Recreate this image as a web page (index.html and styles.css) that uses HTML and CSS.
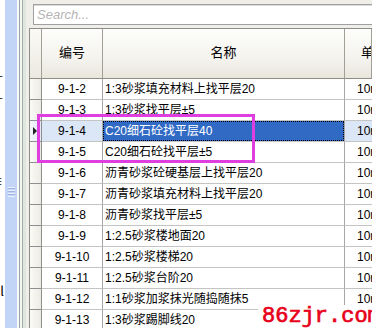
FILE: index.html
```html
<!DOCTYPE html>
<html>
<head>
<meta charset="utf-8">
<link rel="stylesheet" href="styles.css">
</head>
<body>
<div class="app">
  <div class="leftpane">
    <div class="frag f1">·</div>
    <div class="frag f2">卄</div>
    <div class="frag f3">卄</div>
    <div class="frag f4">≡</div>
    <div class="frag f5">l</div>
  </div>
  <div class="vbar"><div class="grip"></div></div>
  <div class="splitter"></div>
  <div class="panel">
    <div class="searchwrap"><div class="search">Search...</div></div>
    <div class="grid">
      <div class="row head">
        <div class="c rh"></div>
        <div class="c code">编号</div>
        <div class="c name">名称</div>
        <div class="c unit">单位</div>
      </div>
      <div class="row"><div class="c rh"></div><div class="c code">9-1-2</div><div class="c name">1:3砂浆填充材料上找平层20</div><div class="c unit">10m²</div></div>
      <div class="row"><div class="c rh"></div><div class="c code">9-1-3</div><div class="c name">1:3砂浆找平层±5</div><div class="c unit">10m²</div></div>
      <div class="row sel"><div class="c rh"><span class="arrow"></span></div><div class="c code">9-1-4</div><div class="c name"><span class="focus">C20细石砼找平层40</span></div><div class="c unit">10m²</div></div>
      <div class="row"><div class="c rh"></div><div class="c code">9-1-5</div><div class="c name">C20细石砼找平层±5</div><div class="c unit">10m²</div></div>
      <div class="row"><div class="c rh"></div><div class="c code">9-1-6</div><div class="c name">沥青砂浆砼硬基层上找平层20</div><div class="c unit">10m²</div></div>
      <div class="row"><div class="c rh"></div><div class="c code">9-1-7</div><div class="c name">沥青砂浆填充材料上找平层20</div><div class="c unit">10m²</div></div>
      <div class="row"><div class="c rh"></div><div class="c code">9-1-8</div><div class="c name">沥青砂浆找平层±5</div><div class="c unit">10m²</div></div>
      <div class="row"><div class="c rh"></div><div class="c code">9-1-9</div><div class="c name">1:2.5砂浆楼地面20</div><div class="c unit">10m²</div></div>
      <div class="row"><div class="c rh"></div><div class="c code">9-1-10</div><div class="c name">1:2.5砂浆楼梯20</div><div class="c unit">10m²</div></div>
      <div class="row"><div class="c rh"></div><div class="c code">9-1-11</div><div class="c name">1:2.5砂浆台阶20</div><div class="c unit">10m²</div></div>
      <div class="row"><div class="c rh"></div><div class="c code">9-1-12</div><div class="c name">1:1砂浆加浆抹光随捣随抹5</div><div class="c unit">10m²</div></div>
      <div class="row"><div class="c rh"></div><div class="c code">9-1-13</div><div class="c name">1:3砂浆踢脚线20</div><div class="c unit">10m²</div></div>
    </div>
  </div>
  <div class="mark"></div>
  <div class="watermark">86zjr.com</div>
</div>
</body>
</html>
```
FILE: styles.css
```css
* { box-sizing: border-box; }
html, body { margin: 0; padding: 0; }
body {
  width: 372px;
  height: 328px;
  overflow: hidden;
  background: #ffffff;
  font-family: "Liberation Sans", Arial, "Noto Sans CJK SC", sans-serif;
  font-size: 12px;
  color: #000;
}
.app {
  position: relative;
  display: flex;
  width: 372px;
  height: 328px;
  overflow: hidden;
}
.leftpane {
  width: 5px;
  flex: none;
  background: #fff;
  overflow: hidden;
  direction: rtl;
  position: relative;
}
.frag {
  font-family: "Noto Sans CJK SC", sans-serif;
  font-size: 13px;
  line-height: 14px;
  white-space: nowrap;
  text-align: right;
  margin-right: 2px;
}
.f1 { margin-top: 12px; }
.f2 { margin-top: 44px; }
.f3 { margin-top: 8px; }
.f4 { margin-top: 68px; }
.f5 { margin-top: 96px; margin-right: 1px; }
.vbar {
  width: 12px;
  flex: none;
  background: #c3d5f6;
  display: flex;
  flex-direction: column;
  align-items: center;
  padding-top: 187px;
}
.grip {
  width: 7px;
  height: 10px;
  background: repeating-linear-gradient(#e9f0fd 0 1px, #9fb5df 1px 2px, transparent 2px 3px);
}
.splitter {
  width: 9px;
  flex: none;
  background: linear-gradient(90deg, #f7f9f7 0 2px, #9ca4aa 2px 3px, #f2f5f2 3px 5px, #a4aea4 5px 6px, #dfe6df 6px 9px);
}
.panel {
  flex: 1;
  background: #efeee8;
  display: flex;
  flex-direction: column;
  padding-left: 3px;
  min-width: 0;
}
.searchwrap {
  height: 28px;
  padding: 4px 0 3px 4px;
}
.search {
  height: 21px;
  border: 1px solid #a0a0a0;
  border-right: none;
  background: #fff;
  box-shadow: inset 0 1px 0 #dcdcdc;
  color: #b4b4b4;
  font-style: italic;
  font-size: 13px;
  line-height: 19px;
  padding-left: 3px;
}
.grid {
  border-top: 1px solid #8e8e88;
  border-left: 1px solid #8e8e88;
  background: #fff;
  flex: 1;
}
.row {
  display: flex;
  height: 21px;
}
.c {
  height: 100%;
  border-right: 1px solid #a7a7a7;
  border-bottom: 1px solid #c4c4c4;
  line-height: 20px;
  white-space: nowrap;
  overflow: hidden;
}
.rh {
  width: 12px;
  flex: none;
  background: linear-gradient(90deg, #fbfaf6, #ecebe3);
  border-right: 1px solid #8f8f8f;
  border-bottom: 1px solid #8f8f8f;
  position: relative;
}
.code {
  width: 61px;
  flex: none;
  text-align: center;
}
.name {
  width: 242px;
  flex: none;
  padding-left: 2px;
}
.unit {
  flex: 1;
  border-right: none;
  padding-left: 12px;
}
.head {
  height: 50px;
}
.head .c {
  background: linear-gradient(#fdfdfb, #f4f3ee 60%, #e8e6dc);
  border-bottom: 1px solid #8e8e88;
  border-right: 1px solid #a19f96;
  line-height: 48px;
  text-align: center;
  font-size: 13px;
  padding-left: 0;
}
.head .unit { text-align: left; padding-left: 16px; }
.head .rh { background: linear-gradient(#fbfaf6, #ebe9e0); }
.sel .code, .sel .unit { background: #dbe6f7; }
.sel .rh { background: linear-gradient(90deg, #f4f6fb, #e2e8f2); }
.sel .name { padding: 0; background: #316ac5; }
.focus {
  display: block;
  height: 20px;
  margin: 0;
  padding-left: 2px;
  color: #fff;
  outline: 1px dotted #000;
  outline-offset: -1px;
}
.arrow {
  position: absolute;
  left: 3px;
  top: 6px;
  width: 0;
  height: 0;
  border-top: 4px solid transparent;
  border-bottom: 4px solid transparent;
  border-left: 4px solid #222;
}
.mark {
  position: absolute;
  left: 37px;
  top: 114px;
  width: 218px;
  height: 49px;
  border: 3px solid #df3ee0;
}
.watermark {
  position: absolute;
  left: 258px;
  top: 305px;
  right: 0;
  bottom: 0;
  padding-left: 4px;
  background: #fff;
  font-family: "Liberation Mono", "Courier New", monospace;
  font-weight: normal;
  font-size: 22px;
  line-height: 23px;
  color: #e8001a;
  white-space: nowrap;
  overflow: hidden;
  -webkit-text-stroke: 0.7px #e8001a;
}
```
